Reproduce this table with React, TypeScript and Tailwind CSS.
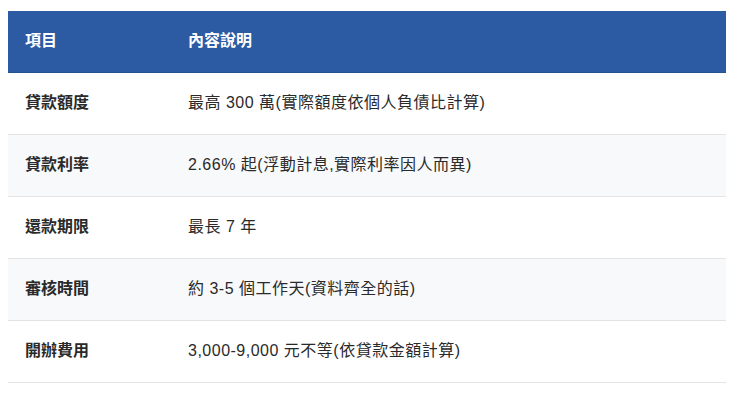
const rows: [string, string][] = [
  ['貸款額度', '最高 300 萬(實際額度依個人負債比計算)'],
  ['貸款利率', '2.66% 起(浮動計息,實際利率因人而異)'],
  ['還款期限', '最長 7 年'],
  ['審核時間', '約 3-5 個工作天(資料齊全的話)'],
  ['開辦費用', '3,000-9,000 元不等(依貸款金額計算)'],
];

export default function App() {
  return (
    <div
      className="min-h-[407px] bg-white pl-2 pr-[14px] pt-[11px]"
      style={{ fontFamily: '"Liberation Sans", "Noto Sans CJK TC", sans-serif' }}
    >
      <table className="w-full border-collapse text-left text-[16px] text-[#2a2a2a]">
        <thead>
          <tr className="bg-[#2c5ba3] text-white">
            <th className="h-[61px] w-[163px] border-b border-[#27528f] px-[17px] font-bold">項目</th>
            <th className="h-[61px] border-b border-[#27528f] px-[17px] font-bold">內容說明</th>
          </tr>
        </thead>
        <tbody>
          {rows.map(([k, v], i) => (
            <tr key={k} className={i % 2 === 1 ? 'bg-[#f8f9fa]' : 'bg-white'}>
              <td className="h-[62px] border-b border-[#e3e3e3] px-[17px] font-semibold">{k}</td>
              <td className="h-[62px] border-b border-[#e3e3e3] px-[17px] tracking-[0.5px]">{v}</td>
            </tr>
          ))}
        </tbody>
      </table>
    </div>
  );
}
